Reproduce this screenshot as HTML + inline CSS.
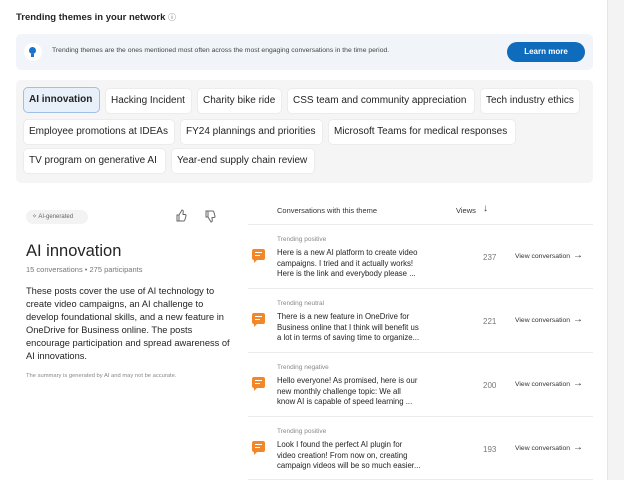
<!DOCTYPE html>
<html><head><meta charset="utf-8"><style>
*{margin:0;padding:0;box-sizing:border-box}
body{width:624px;height:480px;overflow:hidden;background:#f3f3f3;font-family:"Liberation Sans",sans-serif;color:#242424;position:relative}
.card{position:absolute;left:0;top:0;width:608px;height:480px;background:#fff;border-right:1px solid #e6e6e6}
.a{position:absolute;white-space:nowrap}
.chip{position:absolute;height:24px;background:#fff;border-radius:4px;font-size:10px;line-height:24px;padding-left:5px;color:#242424;box-shadow:0 0 0 1px #ececec;white-space:nowrap;overflow:hidden}
.lbl{position:absolute;left:277px;font-size:6.5px;color:#888;white-space:nowrap}
.t{position:absolute;left:277px;font-size:7.8px;line-height:10.5px;color:#242424;white-space:nowrap}
.cnt{position:absolute;left:483px;font-size:8px;color:#777}
.vc{position:absolute;left:515px;font-size:6.8px;color:#333;white-space:nowrap}
.ar{position:absolute;left:573px;font-size:10px;color:#333}
.hr{position:absolute;left:248px;width:345px;height:1px;background:#ececec}
.ic{position:absolute;left:252px;width:13px;height:11px;background:#f0882b;border-radius:2px}
.ic:after{content:"";position:absolute;left:2px;bottom:-3px;border-left:3px solid #f0882b;border-bottom:3px solid transparent}
.ic i{position:absolute;left:3px;height:1px;background:#fff}
</style></head><body>
<div class="card"></div>
<div class="a" style="left:16px;top:12px;font-size:9.5px;font-weight:bold">Trending themes in your network <span style="font-weight:normal;font-size:8px;color:#666">ⓘ</span></div>
<div class="a" style="left:16px;top:34px;width:577px;height:36px;background:#f1f5f9;border-radius:5px"></div>
<div class="a" style="left:24px;top:43px;width:18px;height:18px;border-radius:9px;background:#fff"></div>
<div class="a" style="left:29px;top:47px;width:7px;height:7px;border-radius:4px;background:#1a73c8"></div>
<div class="a" style="left:31px;top:54px;width:3px;height:3px;background:#1a73c8"></div>
<div class="a" style="left:52px;top:47px;font-size:6.8px;color:#444">Trending themes are the ones mentioned most often across the most engaging conversations in the time period.</div>
<div class="a" style="left:507px;top:42px;width:78px;height:20px;border-radius:10px;background:#0f6cbd;color:#fff;font-size:8px;font-weight:bold;text-align:center;line-height:20px">Learn more</div>
<div class="a" style="left:16px;top:80px;width:577px;height:103px;background:#f5f5f5;border-radius:5px"></div>
<div class="chip" style="left:24px;top:88px;width:75px;background:#e8f0f9;box-shadow:0 0 0 1px #9fc0e4;font-weight:bold">AI innovation</div>
<div class="chip" style="left:106px;top:89px;width:85px">Hacking Incident</div>
<div class="chip" style="left:198px;top:89px;width:83px">Charity bike ride</div>
<div class="chip" style="left:288px;top:89px;width:186px">CSS team and community appreciation</div>
<div class="chip" style="left:481px;top:89px;width:98px">Tech industry ethics</div>
<div class="chip" style="left:24px;top:120px;width:150px">Employee promotions at IDEAs</div>
<div class="chip" style="left:181px;top:120px;width:141px">FY24 plannings and priorities</div>
<div class="chip" style="left:329px;top:120px;width:186px">Microsoft Teams for medical responses</div>
<div class="chip" style="left:24px;top:149px;width:141px">TV program on generative AI</div>
<div class="chip" style="left:172px;top:149px;width:142px">Year-end supply chain review</div>

<div class="a" style="left:26px;top:210px;width:62px;height:14px;border-radius:7px;background:#f3f3f3;font-size:6px;color:#666;line-height:14px;padding-left:6px">✧ AI-generated</div>
<svg class="a" style="left:175px;top:209px" width="12" height="13" viewBox="0 0 12 13" fill="none" stroke="#666" stroke-width="1"><path d="M2 6h2v6H2zM4 6l3-5c1 0 1.5 1 1.2 2L8 5.5h2c.8 0 1.2.7 1 1.4l-1.2 4.2c-.2.6-.6.9-1.2.9H4"/></svg>
<svg class="a" style="left:204px;top:210px" width="12" height="13" viewBox="0 0 12 13" fill="none" stroke="#666" stroke-width="1"><path d="M2 7h2V1H2zM4 7l3 5c1 0 1.5-1 1.2-2L8 7.5h2c.8 0 1.2-.7 1-1.4L9.8 1.9C9.6 1.3 9.2 1 8.6 1H4"/></svg>
<div class="a" style="left:26px;top:242px;font-size:16.5px">AI innovation</div>
<div class="a" style="left:26px;top:265px;font-size:7.5px;color:#777">15 conversations • 275 participants</div>
<div class="a" style="left:26px;top:285px;font-size:9.3px;line-height:12.9px">These posts cover the use of AI technology to<br>create video campaigns, an AI challenge to<br>develop foundational skills, and a new feature in<br>OneDrive for Business online. The posts<br>encourage participation and spread awareness of<br>AI innovations.</div>
<div class="a" style="left:26px;top:373px;font-size:5.8px;color:#888">The summary is generated by AI and may not be accurate.</div>

<div class="a" style="left:277px;top:206px;font-size:7.5px;color:#333">Conversations with this theme</div>
<div class="a" style="left:456px;top:206px;font-size:7.5px;color:#333">Views</div>
<div class="a" style="left:483px;top:203px;font-size:10px;color:#333">↓</div>
<div class="hr" style="top:224px"></div>

<span class="lbl" style="top:236px">Trending positive</span>
<div class="ic" style="top:249px"><i style="top:3px;width:7px"></i><i style="top:6px;width:5px"></i></div>
<div class="t" style="top:248px">Here is a new AI platform to create video<br>campaigns. I tried and it actually works!<br>Here is the link and everybody please ...</div>
<div class="cnt" style="top:253px">237</div><div class="vc" style="top:253px">View conversation</div><div class="ar" style="top:250px">→</div>
<div class="hr" style="top:288px"></div>

<span class="lbl" style="top:300px">Trending neutral</span>
<div class="ic" style="top:313px"><i style="top:3px;width:7px"></i><i style="top:6px;width:5px"></i></div>
<div class="t" style="top:312px">There is a new feature in OneDrive for<br>Business online that I think will benefit us<br>a lot in terms of saving time to organize...</div>
<div class="cnt" style="top:317px">221</div><div class="vc" style="top:317px">View conversation</div><div class="ar" style="top:314px">→</div>
<div class="hr" style="top:352px"></div>

<span class="lbl" style="top:364px">Trending negative</span>
<div class="ic" style="top:377px"><i style="top:3px;width:7px"></i><i style="top:6px;width:5px"></i></div>
<div class="t" style="top:376px">Hello everyone! As promised, here is our<br>new monthly challenge topic: We all<br>know AI is capable of speed learning ...</div>
<div class="cnt" style="top:381px">200</div><div class="vc" style="top:381px">View conversation</div><div class="ar" style="top:378px">→</div>
<div class="hr" style="top:416px"></div>

<span class="lbl" style="top:428px">Trending positive</span>
<div class="ic" style="top:441px"><i style="top:3px;width:7px"></i><i style="top:6px;width:5px"></i></div>
<div class="t" style="top:440px">Look I found the perfect AI plugin for<br>video creation! From now on, creating<br>campaign videos will be so much easier...</div>
<div class="cnt" style="top:445px">193</div><div class="vc" style="top:445px">View conversation</div><div class="ar" style="top:442px">→</div>
<div class="hr" style="top:479px"></div>
</body></html>
